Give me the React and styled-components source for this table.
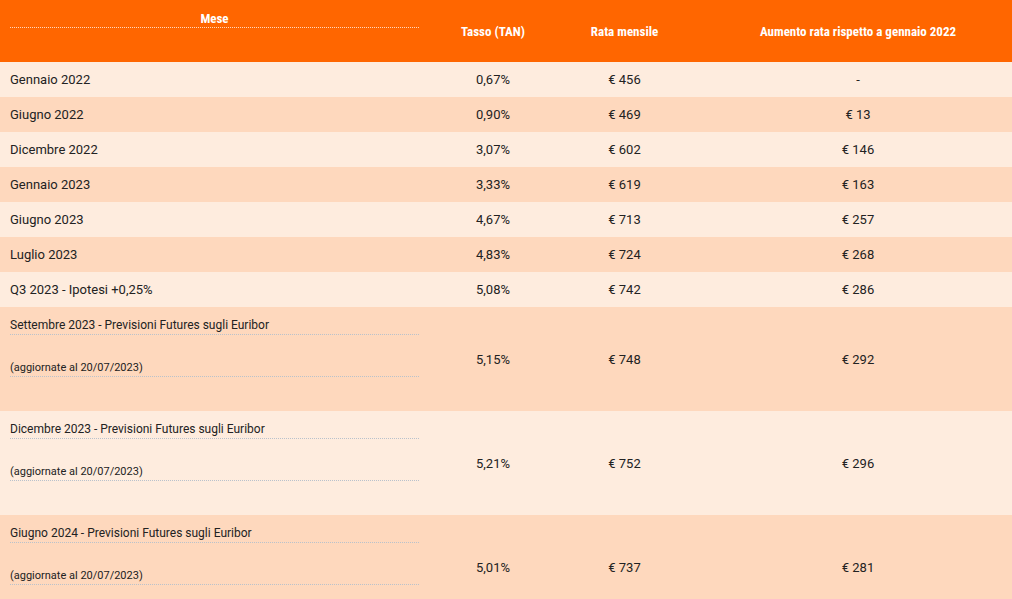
import React from "react";
import styled, { createGlobalStyle } from "styled-components";

const GlobalStyle = createGlobalStyle`
  html, body {
    margin: 0;
    padding: 0;
    background: #ffffff;
  }
  body {
    font-family: Roboto, "Liberation Sans", sans-serif;
    color: #222222;
  }
`;

const rows = [
  { month: "Gennaio 2022", tan: "0,67%", rata: "€ 456", diff: "-" },
  { month: "Giugno 2022", tan: "0,90%", rata: "€ 469", diff: "€ 13" },
  { month: "Dicembre 2022", tan: "3,07%", rata: "€ 602", diff: "€ 146" },
  { month: "Gennaio 2023", tan: "3,33%", rata: "€ 619", diff: "€ 163" },
  { month: "Giugno 2023", tan: "4,67%", rata: "€ 713", diff: "€ 257" },
  { month: "Luglio 2023", tan: "4,83%", rata: "€ 724", diff: "€ 268" },
  { month: "Q3 2023 - Ipotesi +0,25%", tan: "5,08%", rata: "€ 742", diff: "€ 286" },
  { month: "Settembre 2023 - Previsioni Futures sugli Euribor", note: "(aggiornate al 20/07/2023)", tan: "5,15%", rata: "€ 748", diff: "€ 292" },
  { month: "Dicembre 2023 - Previsioni Futures sugli Euribor", note: "(aggiornate al 20/07/2023)", tan: "5,21%", rata: "€ 752", diff: "€ 296" },
  { month: "Giugno 2024 - Previsioni Futures sugli Euribor", note: "(aggiornate al 20/07/2023)", tan: "5,01%", rata: "€ 737", diff: "€ 281" },
];

const Table = styled.table`
  width: 1012px;
  border-collapse: collapse;
  table-layout: fixed;
  font-size: 13px;
`;

const HeadCell = styled.th`
  background: #ff6600;
  color: #ffffff;
  font-family: Roboto, "Liberation Sans", sans-serif;
  font-stretch: 75%;
  font-size: 13px;
  font-weight: 700;
  text-align: center;
  vertical-align: ${({ $top }) => ($top ? "top" : "middle")};
  padding: 10px;
  height: 42px;
`;

const Row = styled.tr`
  background: ${({ $dark }) => ($dark ? "#fed8bd" : "#feecde")};
`;

const Cell = styled.td`
  padding: 10px;
  line-height: 15px;
  text-align: ${({ $left }) => ($left ? "left" : "center")};
  vertical-align: middle;
`;

const Label = styled.div`
  line-height: 17px;
  font-size: ${({ $size }) => $size || "12px"};
  border-bottom: 1px dotted ${({ $light }) => ($light ? "rgba(255,255,255,0.75)" : "#b9c2cc")};
  margin: 0 12px 24px 0;
`;

export default function App() {
  return (
    <>
      <GlobalStyle />
      <Table>
        <colgroup>
          <col style={{ width: 441 }} />
          <col style={{ width: 104 }} />
          <col style={{ width: 159 }} />
          <col style={{ width: 308 }} />
        </colgroup>
        <thead>
          <tr>
            <HeadCell $top>
              <Label $light $size="13px">Mese</Label>
            </HeadCell>
            <HeadCell>Tasso (TAN)</HeadCell>
            <HeadCell>Rata mensile</HeadCell>
            <HeadCell>Aumento rata rispetto a gennaio 2022</HeadCell>
          </tr>
        </thead>
        <tbody>
          {rows.map((r, i) => (
            <Row key={r.month} $dark={i % 2 === 1}>
              <Cell $left>
                {r.note ? (
                  <>
                    <Label>{r.month}</Label>
                    <Label $size="11px">{r.note}</Label>
                  </>
                ) : (
                  r.month
                )}
              </Cell>
              <Cell>{r.tan}</Cell>
              <Cell>{r.rata}</Cell>
              <Cell>{r.diff}</Cell>
            </Row>
          ))}
        </tbody>
      </Table>
    </>
  );
}
